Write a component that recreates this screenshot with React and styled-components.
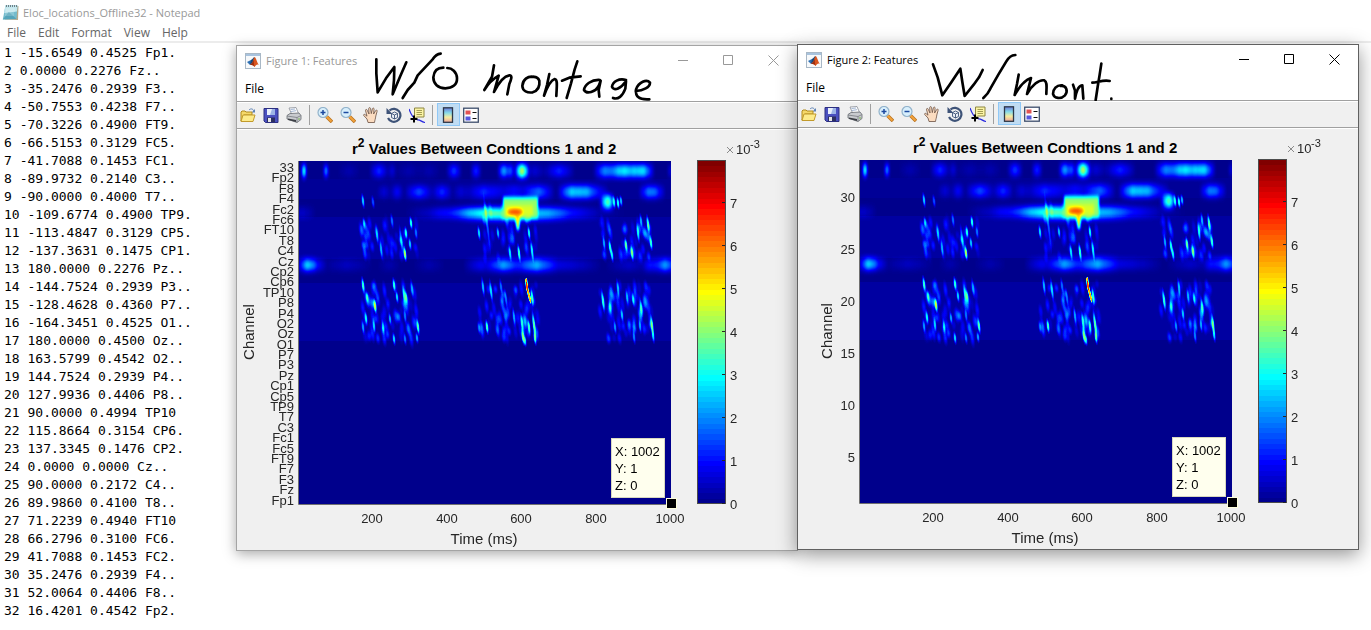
import styled, { createGlobalStyle } from 'styled-components';

const GlobalStyle = createGlobalStyle`
  * {
    box-sizing: border-box;
  }
  body {
    margin: 0;
    background: #ffffff;
    font-family: 'Open Sans', 'Noto Sans', sans-serif;
    font-size: 12px;
    overflow: hidden;
  }
  button {
    border: 0;
    padding: 0;
    background: transparent;
    font: inherit;
    color: inherit;
  }
`;

const Desktop = styled.main`
  position: relative;
  min-height: 100vh;
  overflow: hidden;
`;

const Notepad = styled.section`
  display: flex;
  flex-direction: column;
  height: 100vh;
  background: #ffffff;
`;

const NotepadTitle = styled.header`
  display: flex;
  align-items: center;
  gap: 4px;
  height: 24px;
  padding-left: 2px;
  color: #999999;
  font-size: 11px;
`;

const NotepadMenu = styled.nav`
  display: flex;
  align-items: center;
  gap: 12px;
  height: 19px;
  padding: 0 0 1px 7px;
  color: #666666;
  border-bottom: 2px solid #ececec;
`;

const NotepadText = styled.textarea`
  flex: 1;
  border: 0;
  outline: 0;
  margin: 0;
  padding: 1px 4px 0;
  resize: none;
  overflow: hidden;
  background: transparent;
  color: #000000;
  font: 13px/18px 'DejaVu Sans Mono', monospace;
`;

const FigureWindow = styled.section`
  position: absolute;
  left: ${({ $left }) => $left}px;
  top: ${({ $top }) => $top}px;
  width: 562px;
  background: #f0f0f0;
  border: 1px solid ${({ $active }) => ($active ? '#606060' : '#a4a4a4')};
  box-shadow: ${({ $active }) =>
    $active
      ? '0 5px 18px rgba(0, 0, 0, 0.42)'
      : '0 3px 12px rgba(0, 0, 0, 0.34)'};
`;

const WindowHead = styled.header`
  position: relative;
  background: #ffffff;
  border-bottom: 1px solid #a0a0a0;
`;

const TitleBar = styled.div`
  display: flex;
  align-items: center;
  height: 29px;
  padding: 0 1px 0 8px;
  color: ${({ $active }) => ($active ? '#000000' : '#999999')};
  font-size: 11px;
`;

const TitleText = styled.span`
  flex: 1;
  margin-left: 5px;
`;

const CaptionButton = styled.button`
  display: flex;
  align-items: center;
  justify-content: center;
  width: 45px;
  height: 28px;
`;

const MenuBar = styled.nav`
  display: flex;
  align-items: center;
  height: 26px;
  padding-left: 8px;
  color: #000000;
`;

const Ink = styled.svg`
  position: absolute;
  left: 0;
  top: 0;
  width: 100%;
  height: 56px;
  pointer-events: none;
  fill: none;
  stroke: #000000;
  stroke-width: 8;
  stroke-linecap: round;
  stroke-linejoin: round;
`;

const ToolBar = styled.div`
  display: flex;
  align-items: flex-start;
  height: 27px;
  border-top: 1px solid #ffffff;
  border-bottom: 1px solid #a0a0a0;
`;

const ToolButton = styled.button`
  display: flex;
  align-items: center;
  justify-content: center;
  width: 23px;
  height: 23px;
  padding: 0 1px 0 0;
  border: 1px solid ${({ $pressed }) => ($pressed ? '#90c8f6' : 'transparent')};
  background: ${({ $pressed }) => ($pressed ? '#c0dcf3' : 'transparent')};
`;

const Separator = styled.span`
  width: 1px;
  height: 20px;
  margin: 2px 4px 0 3px;
  background: #a0a0a0;
`;

const Canvas = styled.svg`
  display: block;
  width: 100%;
  border-top: 1px solid #ffffff;
  font-family: 'Liberation Sans', Arial, sans-serif;
  font-size: 13px;
  fill: #262626;
`;

const locations = `1 -15.6549 0.4525 Fp1.
2 0.0000 0.2276 Fz..
3 -35.2476 0.2939 F3..
4 -50.7553 0.4238 F7..
5 -70.3226 0.4900 FT9.
6 -66.5153 0.3129 FC5.
7 -41.7088 0.1453 FC1.
8 -89.9732 0.2140 C3..
9 -90.0000 0.4000 T7..
10 -109.6774 0.4900 TP9.
11 -113.4847 0.3129 CP5.
12 -137.3631 0.1475 CP1.
13 180.0000 0.2276 Pz..
14 -144.7524 0.2939 P3..
15 -128.4628 0.4360 P7..
16 -164.3451 0.4525 O1..
17 180.0000 0.4500 Oz..
18 163.5799 0.4542 O2..
19 144.7524 0.2939 P4..
20 127.9936 0.4406 P8..
21 90.0000 0.4994 TP10
22 115.8664 0.3154 CP6.
23 137.3345 0.1476 CP2.
24 0.0000 0.0000 Cz..
25 90.0000 0.2172 C4..
26 89.9860 0.4100 T8..
27 71.2239 0.4940 FT10
28 66.2796 0.3100 FC6.
29 41.7088 0.1453 FC2.
30 35.2476 0.2939 F4..
31 52.0064 0.4406 F8..
32 16.4201 0.4542 Fp2.`;

const channels = [
  '33', 'Fp2', 'F8', 'F4', 'Fc2', 'Fc6', 'FT10', 'T8', 'C4', 'Cz', 'Cp2',
  'Cp6', 'TP10', 'P8', 'P4', 'O2', 'Oz', 'O1', 'P7', 'P3', 'Pz', 'Cp1',
  'Cp5', 'TP9', 'T7', 'C3', 'Fc1', 'Fc5', 'FT9', 'F7', 'F3', 'Fz', 'Fp1',
];

const ROW = 343 / 33;

const channelTicks = channels.map((label, i) => ({
  label,
  y: Math.round(42 + i * ROW),
}));

const numberTicks = [30, 25, 20, 15, 10, 5].map((n, i) => ({
  label: n,
  y: 73 + i * 52,
}));

// row activity: [x, y, half width, height, level]
const blobs = [
  [5, 10, 3, 11, 0.5],
  [27, 10, 3, 10, 0.34],
  [80, 10, 10, 11, 0.18],
  [93, 10, 5, 11, 0.09],
  [50, 10, 12, 11, 0.04],
  [110, 10, 14, 11, 0.04],
  [130, 10, 12, 11, 0.04],
  [155, 10, 8, 11, 0.2],
  [177, 10, 6, 11, 0.18],
  [205, 10, 7, 11, 0.32],
  [212, 10, 4, 11, 0.22],
  [223, 10, 8, 12, 0.6],
  [236, 10, 12, 11, 0.08],
  [260, 10, 16, 11, 0.17],
  [306, 10, 12, 12, 0.27],
  [319, 10, 12, 12, 0.24],
  [325, 10, 12, 12, 0.24],
  [335, 10, 12, 12, 0.3],
  [345, 10, 11, 12, 0.32],
  [371, 10, 3, 10, 0.1],
  [85, 31, 8, 10, 0.08],
  [98, 31, 7, 11, 0.12],
  [120, 31, 15, 11, 0.2],
  [143, 31, 11, 11, 0.17],
  [162, 31, 9, 11, 0.08],
  [185, 31, 20, 12, 0.16],
  [215, 30, 26, 12, 0.12],
  [240, 31, 16, 12, 0.22],
  [273, 31, 15, 12, 0.34],
  [288, 31, 14, 12, 0.3],
  [302, 31, 8, 11, 0.1],
  [349, 31, 10, 11, 0.22],
  [357, 31, 10, 11, 0.18],
  [3, 52, 14, 10, 0.07],
  [140, 52, 34, 9, 0.09],
  [170, 52, 40, 9, 0.17],
  [195, 52, 44, 10, 0.3],
  [215, 53, 56, 12, 0.3],
  [250, 52, 50, 10, 0.15],
  [262, 52, 64, 10, 0.08],
  [8, 104, 10, 11, 0.32],
  [16, 104, 12, 10, 0.17],
  [48, 104, 26, 10, 0.06],
  [90, 104, 12, 10, 0.04],
  [130, 104, 16, 10, 0.04],
  [182, 104, 18, 11, 0.12],
  [204, 104, 17, 11, 0.28],
  [220, 104, 24, 11, 0.1],
  [238, 104, 22, 12, 0.29],
  [262, 104, 20, 10, 0.1],
  [283, 104, 20, 10, 0.06],
  [330, 104, 24, 10, 0.07],
  [351, 104, 8, 11, 0.15],
  [366, 104, 14, 11, 0.3],
  [309, 41, 7, 12, 0.5],
  [304, 41, 5, 9, 0.15],
];

// thin leaning marks: [x, y, half length, level]
const marks = [
  [64, 40, 9, 0.36], [74, 41, 8, 0.22], [65, 62, 7, 0.28],
  [78, 74, 12, 0.28], [82, 88, 12, 0.3], [102, 78, 16, 0.26],
  [107, 72, 8, 0.42], [112, 62, 8, 0.44], [106, 93, 9, 0.58],
  [111, 83, 8, 0.34], [93, 60, 9, 0.24], [117, 72, 8, 0.24],
  [64, 124, 10, 0.44], [68, 136, 7, 0.3], [76, 145, 9, 0.56],
  [95, 124, 9, 0.42], [98, 136, 8, 0.36], [105, 134, 11, 0.38],
  [107, 136, 9, 0.42], [113, 128, 12, 0.24], [67, 157, 9, 0.36],
  [75, 165, 9, 0.34], [84, 166, 9, 0.32], [91, 158, 8, 0.3],
  [95, 178, 8, 0.36], [106, 155, 10, 0.25], [119, 166, 10, 0.46],
  [118, 177, 7, 0.3], [106, 178, 8, 0.25], [64, 166, 9, 0.28],
  [180, 72, 9, 0.36], [188, 62, 34, 0.22], [199, 72, 8, 0.33],
  [220, 92, 11, 0.46], [211, 92, 10, 0.36], [230, 72, 9, 0.4],
  [233, 90, 13, 0.38], [184, 126, 12, 0.32], [192, 130, 14, 0.36],
  [202, 126, 10, 0.24], [188, 166, 9, 0.48], [215, 156, 12, 0.3],
  [207, 138, 12, 0.24], [233, 136, 11, 0.42], [223, 162, 12, 0.42],
  [224, 176, 10, 0.48], [226, 180, 7, 0.4], [230, 166, 10, 0.46],
  [235, 164, 16, 0.5], [236, 177, 9, 0.48], [180, 167, 8, 0.24],
  [315, 41, 8, 0.38], [319, 42, 8, 0.44], [322, 40, 7, 0.34],
  [327, 84, 9, 0.48], [311, 86, 10, 0.43], [313, 94, 9, 0.38],
  [349, 63, 11, 0.45], [339, 72, 12, 0.38], [352, 82, 9, 0.43],
  [333, 92, 10, 0.48], [305, 82, 9, 0.3], [342, 60, 9, 0.3],
  [304, 140, 14, 0.42], [319, 128, 12, 0.32], [328, 136, 10, 0.3],
  [334, 138, 9, 0.34], [342, 146, 11, 0.34], [323, 154, 9, 0.33],
  [353, 164, 12, 0.42], [354, 174, 10, 0.38], [341, 165, 9, 0.3],
  [316, 166, 9, 0.28], [335, 176, 9, 0.26], [311, 146, 8, 0.24],
];

const clusters = [
  [62, 118, 60, 96, 40],
  [62, 118, 124, 178, 60],
  [180, 238, 44, 98, 36],
  [180, 240, 124, 178, 60],
  [301, 353, 60, 96, 40],
  [301, 353, 124, 178, 64],
];

function scatter() {
  let seed = 17;
  const next = () => {
    seed = (seed * 16807) % 2147483647;
    return seed / 2147483647;
  };
  const out = [];
  clusters.forEach(([x1, x2, y1, y2, count]) => {
    for (let i = 0; i < count; i++) {
      out.push([
        x1 + next() * (x2 - x1),
        y1 + next() * (y2 - y1),
        6 + next() * 6,
        0.04 + next() * 0.12,
      ]);
    }
  });
  return out;
}

const allMarks = [...scatter(), ...marks];

function jet(t) {
  const ramp = (c) =>
    Math.round(255 * Math.max(0, Math.min(1, 1.5 - Math.abs(4 * t - c))));
  return `rgb(${ramp(3)}, ${ramp(2)}, ${ramp(1)})`;
}

function HeatMap({ id }) {
  return (
    <>
      <defs>
        <radialGradient id={`${id}-soft`}>
          <stop offset="0" stopColor="#fff" stopOpacity="1" />
          <stop offset="0.35" stopColor="#fff" stopOpacity="0.8" />
          <stop offset="0.7" stopColor="#fff" stopOpacity="0.25" />
          <stop offset="1" stopColor="#fff" stopOpacity="0" />
        </radialGradient>
        <linearGradient id={`${id}-fade`}>
          <stop offset="0" stopColor="#fff" stopOpacity="0" />
          <stop offset="0.25" stopColor="#fff" stopOpacity="0.55" />
          <stop offset="0.5" stopColor="#fff" stopOpacity="1" />
          <stop offset="0.75" stopColor="#fff" stopOpacity="0.55" />
          <stop offset="1" stopColor="#fff" stopOpacity="0" />
        </linearGradient>
        <filter
          id={`${id}-jet`}
          filterUnits="userSpaceOnUse"
          x="0"
          y="0"
          width="372"
          height="343"
          colorInterpolationFilters="sRGB"
        >
          <feComponentTransfer>
            <feFuncR type="table" tableValues="0 0 0 0 .5 1 1 1 .5" />
            <feFuncG type="table" tableValues="0 0 .5 1 1 1 .5 0 0" />
            <feFuncB type="table" tableValues=".55 1 1 1 .5 0 0 0 0" />
          </feComponentTransfer>
        </filter>
        <filter
          id={`${id}-row`}
          filterUnits="userSpaceOnUse"
          x="-10"
          y="-10"
          width="392"
          height="150"
          colorInterpolationFilters="sRGB"
        >
          <feGaussianBlur stdDeviation="1 3" />
        </filter>
        <filter
          id={`${id}-edge`}
          x="-20%"
          y="-20%"
          width="140%"
          height="140%"
          colorInterpolationFilters="sRGB"
        >
          <feGaussianBlur stdDeviation="1 2" />
        </filter>
        <clipPath id={`${id}-clip`}>
          <rect width="372" height="343" />
        </clipPath>
      </defs>
      <g transform="translate(62 31)" clipPath={`url(#${id}-clip)`}>
        <g filter={`url(#${id}-jet)`}>
          <rect width="372" height="343" fill="#000" />
          <g fill="#fff">
            <rect y="18" width="372" height="20" opacity="0.01" />
            <rect y="56" width="372" height="42" opacity="0.025" />
            <rect y="122" width="372" height="58" opacity="0.025" />
          </g>
          <g fill={`url(#${id}-fade)`} filter={`url(#${id}-row)`}>
            {blobs.map(([x, y, half, height, level], i) => (
              <rect
                key={i}
                x={x - half}
                y={y - height / 2}
                width={half * 2}
                height={height}
                opacity={level * 1.05}
              />
            ))}
          </g>
          <g fill={`url(#${id}-soft)`}>
            {allMarks.map(([x, y, len, level], i) => (
              <ellipse
                key={i}
                cx={x}
                cy={y}
                rx={level < 0.17 ? 3 : 2}
                ry={len}
                opacity={level}
                transform={`rotate(-7 ${x} ${y})`}
              />
            ))}
          </g>
          <g filter={`url(#${id}-edge)`}>
            <rect x="204" y="36" width="35" height="21" fill="#848484" />
            <rect x="206" y="44" width="28" height="12" fill="#969696" />
            <ellipse cx="216" cy="51" rx="8" ry="3" fill="#d4d4d4" />
            <path d="M216 55h5l-1 14h-2z" fill="#a8a8a8" />
          </g>
          <path d="M226 118l2-1 1 9 3 12 0 5-2-4-3-12z" fill="#b4b4b4" />
          <path d="M227 121l1 0 1 9-1 0z" fill="#e4e4e4" />
        </g>
      </g>
    </>
  );
}

function ColorBar() {
  const bands = Array.from({ length: 64 }, (_, i) => i);
  return (
    <g>
      <g shapeRendering="crispEdges">
        {bands.map((i) => (
          <rect
            key={i}
            x="461"
            y="31"
            width="28"
            height={343 - (i * 343) / 64}
            fill={jet((i + 1) / 64)}
          />
        ))}
      </g>
      <rect
        x="460.5"
        y="30.5"
        width="28"
        height="343"
        fill="none"
        stroke="#4c4c4c"
      />
      {[0, 1, 2, 3, 4, 5, 6, 7].map((n) => (
        <g key={n}>
          <path d={`M485 ${373.5 - n * 43}h3`} stroke="#262626" />
          <text x="493" y={379 - n * 43}>
            {n}
          </text>
        </g>
      ))}
      <path d="M490 17l6 6m0 -6l-6 6" stroke="#8a8a8a" />
      <text x="499" y="24">
        10
      </text>
      <text x="513" y="18" fontSize="11">
        -3
      </text>
    </g>
  );
}

function Plot({ id, ticks, labelX }) {
  return (
    <Canvas viewBox="0 0 560 420" role="img" aria-label="Channel values">
      <text x="115" y="24" fontSize="15" fontWeight="bold" fill="#000">
        r
        <tspan fontSize="12" dy="-7">
          2
        </tspan>
        <tspan dy="7"> Values Between Condtions 1 and 2</tspan>
      </text>
      <HeatMap id={id} />
      <path d="M61.500 31V374.500H434" fill="none" stroke="#707070" />
      <g textAnchor="end">
        {ticks.map(({ label, y }) => (
          <text key={label} x="57" y={y}>
            {label}
          </text>
        ))}
      </g>
      <g textAnchor="middle">
        {[200, 400, 600, 800, 1000].map((n, i) => (
          <text key={n} x={Math.round(135 + i * 74.5)} y="393">
            {n}
          </text>
        ))}
        <text x="247" y="414" fontSize="15">
          Time (ms)
        </text>
        <text
          fontSize="15"
          transform={`translate(${labelX} 202) rotate(-90)`}
        >
          Channel
        </text>
      </g>
      <ColorBar />
      <rect x="374.500" y="308.500" width="53" height="59" fill="#ffffee" stroke="#d8d8c0" />
      <g fill="#000">
        <text x="378" y="326">X: 1002</text>
        <text x="378" y="343">Y: 1</text>
        <text x="378" y="360">Z: 0</text>
      </g>
      <rect x="429.500" y="368.500" width="10" height="10" fill="#000" stroke="#ffffdc" />
    </Canvas>
  );
}

function NotepadIcon() {
  return (
    <svg width="17" height="17" viewBox="0 0 17 17" aria-hidden="true">
      <path d="M4 2h12.500l-.5 14-13-.5z" fill="#b8a98a" />
      <path d="M3.500 1.500h12L14.500 15 .8 15.500z" fill="#74bccd" />
      <path d="M3.500 1.500h12l-.6 6L2.200 9z" fill="#c3e7ee" />
      <path d="M.8 15.500l6-7.500 7.700 7z" fill="#3f94ad" opacity=".6" />
      <path d="M4 2h12" stroke="#6f8086" strokeWidth="2" strokeDasharray="1 1" />
      <path d="M4 5h9M4 7h9M3 9h9M3 11h9" stroke="#fff" strokeWidth=".5" opacity=".7" />
    </svg>
  );
}

function MatlabIcon() {
  return (
    <svg width="16" height="16" viewBox="0 0 16 16" aria-hidden="true">
      <rect x=".5" y=".5" width="15" height="15" fill="#f7f9fb" stroke="#a9b8c6" />
      <path d="M1 1h14v2H1z" fill="#a8c3de" />
      <path d="M2 9l4-2 2 2-3 3z" fill="#2c6fb3" />
      <path d="M6 7c2-1 2.500-3 3.500-3L8 9.500 5 12z" fill="#174a7c" />
      <path d="M9.500 4c1.500 0 2.500 6 4.500 8-2-1-3 0-4.500 2C8 12 7 12 5 12c3-2 3-5 4.500-8z" fill="#d9541e" />
      <path d="M9.500 4c-1 3-1 6 0 10-1-2-2-2-4.500-2 3-2 3.500-5 4.500-8z" fill="#9a2f12" />
    </svg>
  );
}

function ToolIcon({ name }) {
  const shapes = {
    open: (
      <>
        <path d="M9 3c2-2 4-1 5 1" fill="none" stroke="#5f83b5" />
        <path d="M15 2v3.500h-3.500z" fill="#5f83b5" />
        <path d="M1 14V5l1-1h3l1 1h6v3H4z" fill="#f5d869" stroke="#b08a1f" />
        <path d="M1 14.500L3 8h12l-2 6.500z" fill="#fdeb8b" stroke="#c29a2b" />
      </>
    ),
    save: (
      <>
        <path d="M1 1.500h14v14H2.500L1 14z" fill="#4a50c0" stroke="#2c2f80" />
        <path d="M4 2h8v6H4z" fill="#e8effb" />
        <path d="M9 2h3v6H7z" fill="#9db4e6" />
        <path d="M4 10.500h8V15H4z" fill="#2c2f60" />
        <path d="M5 11h3v4H5z" fill="#e6e6e6" />
      </>
    ),
    print: (
      <>
        <path d="M3 1l7-.5 2.500 6L6 8z" fill="#fff" stroke="#8a8f98" strokeWidth=".8" />
        <path d="M4.500 2.500l4.500-.5M5 4.500l5-.8" stroke="#89a2c8" strokeWidth=".8" />
        <path d="M1 8.500l3-2 9-.5 2 2.500v4l-4 3L1 12z" fill="#c9cbcf" stroke="#666a70" strokeWidth=".8" />
        <path d="M1 9l10 1.500 4-2M11 10.500v5" fill="none" stroke="#777b80" strokeWidth=".8" />
        <path d="M2 11.500l8 1.500v2l-8-2z" fill="#3d4046" />
        <path d="M12 12h2" stroke="#77b54a" />
      </>
    ),
    zoomIn: (
      <>
        <path d="M9.500 9.500l5.500 5.500" stroke="#b8701f" strokeWidth="3.500" />
        <path d="M9.500 9.500l5 5" stroke="#f2a33c" strokeWidth="2" />
        <circle cx="6" cy="5.500" r="5" fill="#d8effc" stroke="#93b3cb" strokeWidth="1.200" />
        <path d="M3.500 5.500h5M6 3v5" stroke="#1c4aa0" strokeWidth="1.500" />
      </>
    ),
    zoomOut: (
      <>
        <path d="M9.500 9.500l5.500 5.500" stroke="#b8701f" strokeWidth="3.500" />
        <path d="M9.500 9.500l5 5" stroke="#f2a33c" strokeWidth="2" />
        <circle cx="6" cy="5.500" r="5" fill="#d8effc" stroke="#93b3cb" strokeWidth="1.200" />
        <path d="M3.500 5.500h5" stroke="#1c4aa0" strokeWidth="1.500" />
      </>
    ),
    hand: (
      <path
        d="M5 15.500L4 12 .7 8.500c-.5-1.300.8-1.500 1.500-.8L4 9.200 2.500 3.500c-.2-1.200 1.300-1.500 1.700-.3L6 7 5.700 1.700C5.700.3 7.400.3 7.600 1.600L8.300 6.600 9.400 1.800c.4-1.200 1.900-.8 1.700.4L10.600 7l2-3.400c.7-1 2-.3 1.500.8L12.800 9c-.3 3-1 4-1.300 6.500z"
        fill="#fbdcc0"
        stroke="#6b5142"
        strokeWidth=".8"
      />
    ),
    rotate: (
      <>
        <path d="M3.500 3.500A6.500 6.500 0 1 1 2 11" fill="none" stroke="#3e5378" strokeWidth="2.200" />
        <path d="M.5 1v6h6z" fill="#3e5378" />
        <path d="M5.500 6.500l3-1.500 3 1.500v4l-3 1.500-3-1.500z M5.500 6.500l3 1.500 3-1.500M8.500 8v4" fill="#e9eef5" stroke="#3e5378" strokeWidth=".9" />
      </>
    ),
    cursor: (
      <>
        <path d="M5.500 1h9.500v9H7.500L5.500 12z" fill="#fbf4a5" stroke="#8e8743" />
        <path d="M7.500 3.500h5.500M7.500 5.500h5.500M7.500 7.500h5.500" stroke="#9a924a" strokeWidth=".9" />
        <path d="M0 2c1 3 2 5 4 8M8 13c3-1 4 2 8 2.500" fill="none" stroke="#2b2be0" strokeWidth="1.200" />
        <path d="M5 8.500v7M1.500 12h7" stroke="#000" strokeWidth="2" />
      </>
    ),
    colorbar: (
      <>
        <defs>
          <linearGradient id="bar" x1="0" y1="0" x2="0" y2="1">
            <stop offset="0" stopColor="#6a78d8" />
            <stop offset=".35" stopColor="#86dcea" />
            <stop offset=".65" stopColor="#f6eda0" />
            <stop offset="1" stopColor="#f0a59a" />
          </linearGradient>
        </defs>
        <rect x="3.500" y=".8" width="9" height="14.500" fill="url(#bar)" stroke="#2d3848" strokeWidth="1.300" />
      </>
    ),
    legend: (
      <>
        <rect x=".7" y="1.200" width="14.600" height="14" fill="#fff" stroke="#3c4d6b" strokeWidth="1.300" />
        <path d="M2.500 3.500h5v4h-5z" fill="#e25353" />
        <path d="M2.500 9.500h5v4h-5z" fill="#5658e0" />
        <path d="M9.500 5.500h4M9.500 11.500h4" stroke="#111" strokeWidth="1.200" />
      </>
    ),
  };
  return (
    <svg width="16" height="16" viewBox="0 0 16 16" fill="none" aria-hidden="true">
      {shapes[name]}
    </svg>
  );
}

function Tool({ name, pressed }) {
  return (
    <ToolButton type="button" aria-label={name} $pressed={pressed}>
      <ToolIcon name={name} />
    </ToolButton>
  );
}

function Caption({ label, d, color }) {
  return (
    <CaptionButton type="button" aria-label={label}>
      <svg width="11" height="11" viewBox="0 0 11 11" fill="none" stroke={color}>
        <path d={d} />
      </svg>
    </CaptionButton>
  );
}

function Figure({ id, title, left, top, active, ink, inkTop, ticks, labelX }) {
  const captionColor = active ? '#000000' : '#999999';
  return (
    <FigureWindow $left={left} $top={top} $active={active}>
      <WindowHead>
        <TitleBar $active={active}>
          <MatlabIcon />
          <TitleText>{title}</TitleText>
          <Caption label="Minimize" d="M0 5.500h10" color={captionColor} />
          <Caption label="Maximize" d="M.5 .5h9v9h-9z" color={captionColor} />
          <Caption label="Close" d="M.5 .5l10 10M10.500 .5l-10 10" color={captionColor} />
        </TitleBar>
        <MenuBar>
          <button type="button">File</button>
        </MenuBar>
        <Ink viewBox={`3 ${inkTop} 1680 168`}>
          {ink.map((d) => (
            <path key={d} d={d} />
          ))}
        </Ink>
      </WindowHead>
      <ToolBar>
        <Tool name="open" />
        <Tool name="save" />
        <Tool name="print" />
        <Separator />
        <Tool name="zoomIn" />
        <Tool name="zoomOut" />
        <Tool name="hand" />
        <Tool name="rotate" />
        <Tool name="cursor" />
        <Separator />
        <Tool name="colorbar" pressed />
        <Tool name="legend" />
      </ToolBar>
      <Plot id={id} ticks={ticks} labelX={labelX} />
    </FigureWindow>
  );
}

// handwritten notes over the window headers
const withoutMontage = [
  'M421 58V100L425 157 450 115 475 81 474 120 470 163 492 110 511 67',
  'M614 41C602 42 597 47 590 58L545 106 535 128 515 150 500 174',
  'M622 83C604 83 594 92 592 112 592 132 606 145 628 145 650 144 664 134 663 114 662 96 648 84 634 84',
  'M774 76L768 110 745 150C756 132 772 116 788 107L774 156C790 124 806 108 820 106 830 106 826 118 820 132L814 163',
  'M896 111C874 106 860 120 859 138 860 154 874 159 890 157 906 152 912 138 910 122 906 112 898 110 890 111',
  'M940 102L933 135 924 167C934 140 946 120 956 117 966 118 962 140 961 168',
  'M1024 64L1016 88 1005 130 992 174M978 122L1000 113 1034 109',
  'M1092 120C1066 118 1046 134 1044 150 1052 164 1078 156 1088 138L1094 122 1088 150 1090 170',
  'M1170 120C1150 114 1130 124 1128 140 1134 156 1156 144 1170 124L1168 146C1160 168 1146 180 1131 174',
  'M1199 153C1222 152 1242 142 1242 128 1232 116 1208 126 1200 148 1198 168 1206 180 1240 178',
];

const withMontage = [
  'M408 73L422 112 436 166 462 128 490 86 496 126 503 168 530 134 546 112 557 90',
  'M655 45C642 46 636 50 628 64L604 104 580 146C574 160 568 166 559 174',
  'M665 104L660 132 653 165C668 138 684 120 702 114L690 162C704 136 726 118 742 121 752 126 748 144 748 162',
  'M796 136C778 134 768 148 768 162 772 176 792 178 804 166 814 152 808 136 792 138',
  'M828 134L834 152 834 176C838 154 846 136 856 136L859 176',
  'M913 71L908 104 902 140 896 180M886 128C900 128 920 118 938 123',
  'M943 176v1',
];

const menuItems = ['File', 'Edit', 'Format', 'View', 'Help'];

function App() {
  return (
    <>
      <GlobalStyle />
      <Desktop>
        <Notepad>
          <NotepadTitle>
            <NotepadIcon />
            <span>Eloc_locations_Offline32 - Notepad</span>
          </NotepadTitle>
          <NotepadMenu>
            {menuItems.map((item) => (
              <button key={item} type="button">
                {item}
              </button>
            ))}
          </NotepadMenu>
          <NotepadText
            aria-label="Electrode locations"
            spellCheck={false}
            defaultValue={locations}
          />
        </Notepad>
        <Figure
          id="fig1"
          title="Figure 1: Features"
          left={236}
          top={45}
          ink={withoutMontage}
          inkTop={18}
          ticks={channelTicks}
          labelX={17}
        />
        <Figure
          id="fig2"
          title="Figure 2: Features"
          left={797}
          top={44}
          active
          ink={withMontage}
          inkTop={15}
          ticks={numberTicks}
          labelX={34}
        />
      </Desktop>
    </>
  );
}

export default App;
